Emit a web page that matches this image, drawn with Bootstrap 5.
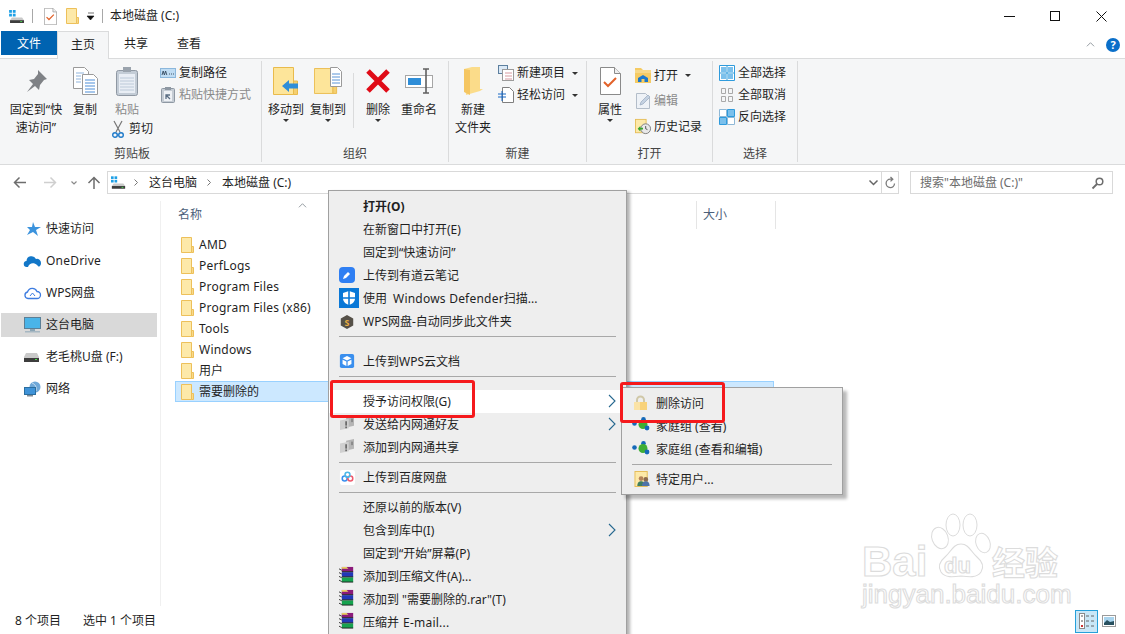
<!DOCTYPE html>
<html lang="zh-CN">
<head>
<meta charset="utf-8">
<title>本地磁盘 (C:)</title>
<link rel="stylesheet" href="https://cdn.jsdelivr.net/npm/bootstrap@5.3.0/dist/css/bootstrap.min.css">
<style>
html,body{margin:0;height:634px;overflow:hidden}
body{width:1125px;background:#fff;color:#1f1f1f;font:12px/18px "Noto Sans","Noto Sans CJK SC",sans-serif;position:relative}
svg{display:block;flex:none;overflow:visible}
.lat{letter-spacing:.22px}
.title-bar{height:31px;padding:1px 0 0 9px}
.tsep{width:1px;height:14px;background:#a8a8a8}
.g7{margin-left:7px}.g8{margin-left:8px}.g9{margin-left:9px}.g11{margin-left:11px}.g1{margin-left:1px}.g2{margin-left:2px}.g3{margin-left:3px}.g4{margin-left:4px}.g5{margin-left:5px}.g6{margin-left:6px}.g18{margin-left:18px}.g15{margin-left:15px}
.win-ctl{margin-left:auto;margin-right:1px}
.win-ctl button{width:46px;height:30px;border:0;background:none;padding:0;display:flex;align-items:center;justify-content:center}
.tab-bar{height:27px;padding-left:1px;position:relative}
.tab-item{height:24px;line-height:26px;text-align:center;width:51px}
.tab-file{width:56px;background:#0063b1;color:#fff}
.tab-on{height:28px;line-height:25px;border:1px solid #dadbdc;border-bottom:0;background:#f5f6f7;margin-bottom:-4px;z-index:2;position:relative;align-self:flex-start;width:52px;margin-right:-1px}
.tab-b{width:56px}.tab-c{width:50px}
.tab-help{margin-left:auto;padding-right:5px;gap:11px}
.ribbon-bar{height:107px;background:#f5f6f7;border-top:1px solid #dadbdc;border-bottom:1px solid #dadbdc;padding:2px 0 2px 3px}
.rg{border-right:1px solid #dadbdc;position:relative}
.rg1{width:259px}.rg2{width:187px}.rg3{width:138px}.rg4{width:126px}.rg5{width:85px}
.rg-body{height:84px;padding-top:5px}
.rg-name{height:18px;line-height:18px;text-align:center;color:#444}
.bigb{display:flex;flex-direction:column;align-items:center;text-align:center;line-height:18px;flex:none}
.bigb .ic{height:30px;margin-bottom:5px;display:flex;align-items:center;justify-content:center}
.w56{width:56px;margin-left:5px}.w40{width:40px}.w44{width:44px}.w36{width:36px}.w34{width:34px}
.mute{color:#8a8a8a}
.caretd{width:0;height:0;border:3px solid transparent;border-top:3px solid #333;border-bottom:0}
.vdiv{width:1px;height:55px;background:#dadbdc;margin:7px 4px 0 5px;flex:none}
.smallc{display:flex;flex-direction:column;flex:none;margin-top:-4px}
.smallr{height:22px;display:flex;align-items:center;gap:3px;white-space:nowrap}
.smallr svg{width:16px}
.smallc.tall{margin-top:-3px}
.smallc.tall .smallr{height:25.5px}
.cutr{height:18px;display:flex;align-items:center;gap:5px;margin-top:1px;margin-left:2px;white-space:nowrap}
.addr-row{height:25px;margin-top:5px;padding-left:14px}
.nav-ic{flex:none}
.addr-box{width:792px;height:23px;border:1px solid #d9d9d9;display:flex;align-items:center;margin-left:7px}
.seg-a{margin:0 10px 0 11px}
.addr-end{margin-left:auto;height:100%;display:flex;align-items:center}
.addr-ref{width:17px;height:100%;border-left:1px solid #d9d9d9;display:flex;align-items:center;justify-content:center;margin-left:3px}
.search-box{width:203px;height:23px;border:1px solid #d9d9d9;margin-left:11px;padding:0 8px 0 9px;color:#6d6d6d;display:flex;align-items:center;justify-content:space-between}
.main-area{flex:1;min-height:0;margin-top:6px}
.side-pane{width:161px;border-right:1px solid #f0f0f0;padding:16px 0 0 1px;flex:none}
.side-row{height:24px;margin-bottom:8px;display:flex;align-items:center;padding-left:23px;gap:5px;width:156px;white-space:nowrap}
.side-row svg{width:17px}
.side-row svg.usb-ic{width:15px;margin-right:2px}
.side-on{background:#d9d9d9}
.list-pane{flex:1;position:relative;padding-left:14px}
.head-row{height:33px;color:#4c607a;position:relative}
.head-name{padding:5px 0 0 3px;width:521px;height:28px}
.sort-up{position:absolute;left:123px;top:2px}
.head-size{border-left:1px solid #e5e5e5;width:80px;height:28px;padding:5px 0 0 6px;border-right:1px solid #e5e5e5}
.file-row{height:21px;width:599px;display:flex;align-items:center;gap:5px;padding-left:5px;border:1px solid transparent;white-space:nowrap}
.file-row svg{width:13px}
.file-sel{background:#cce8ff;border-color:#99d1ff}
.status-bar{height:28px;padding:2px 0 0 15px;position:relative}
.st-a{width:68px}
.view-btns{margin-left:auto;margin-right:9px;gap:4px}
.view-on{width:23px;height:23px;background:#c9e7f7;border:1px solid #26a0da;display:flex;align-items:center;justify-content:center}
.ctx{position:absolute;background:#eee;border:1px solid #a0a0a0;padding:4px 0;margin:0;list-style:none;box-shadow:4px 4px 3px rgba(0,0,0,.28);z-index:5}
.ctx-main{left:328px;top:190px;width:299px;height:460px;box-shadow:3px 2px 3px rgba(0,0,0,.3)}
.ctx-sub{left:621px;top:387px;width:222px;height:108px;z-index:6}
.ctx li{display:flex;align-items:center;height:23px;padding:0 0 0 34px;position:relative;white-space:nowrap}
.ctx li>svg.lic{position:absolute;left:10px;top:3px}
.ctx-sub li>svg.lic{left:12px}
.ctx li>svg.t1{top:1px}
.ctx li>svg.t4{top:4px}
.ctx-sub li>svg.t2{top:2px;left:10px}
.ctx-sub li>svg.t3{top:3px;left:10px}
.ctx li.bold-i{font-weight:700;padding-top:1px}
.ctx li.hit{background:#fff}
.ctx li.sp{height:7px;padding:0;margin:0}
.ctx li.sp::after{content:"";position:absolute;left:10px;right:10px;top:3px;height:1px;background:#a8a8a8}
.ctx li.gap{height:10px;padding:0}
.ctx li>svg.arr{position:absolute;right:10px;top:4px}
.redbox{position:absolute;border:3.5px solid #f5191c;border-radius:3px;z-index:7}
.rb-a{left:330px;top:380px;width:145px;height:38px}
.rb-b{left:620px;top:382px;width:105px;height:41px}
.wm{position:absolute;left:858px;top:510px;z-index:1}
.wm text{fill:#fff;stroke:#dcdcdc;stroke-width:1.1}
</style>
</head>
<body class="d-flex flex-column">
<svg width="0" height="0" class="position-absolute">
<defs>
<symbol id="drive" viewBox="0 0 17 14"><rect x="0" y="0" width="3" height="3" fill="#1ea0e6"/><rect x="4" y="0" width="3" height="3" fill="#1ea0e6"/><rect x="0" y="4" width="3" height="3" fill="#1ea0e6"/><rect x="4" y="4" width="3" height="3" fill="#1ea0e6"/><path d="M3 8h11l2 3v3H1v-3z" fill="#c9c9c9"/><rect x="1" y="11" width="15" height="3" fill="#3d3d3d"/><rect x="12" y="12" width="2" height="1" fill="#4ce04c"/></symbol>
<symbol id="fold" viewBox="0 0 13 16"><path d="M.5.5h10v15H.5z" fill="#fde9a9" stroke="#edc05a"/><path d="M10.5 9.5h2v6h-2z" fill="#f8d98a" stroke="#edc05a"/></symbol>
<symbol id="bigfold" viewBox="0 0 26 28"><path d="M.5.5h20v27H.5z" fill="#fde59a" stroke="#e9bb4c"/><path d="M20.5 14v13.500h4V14z" fill="#f5cf70" stroke="#e9bb4c"/></symbol>
<symbol id="doccheck" viewBox="0 0 21 28"><path d="M.5.500h14l6 6v21H.500z" fill="#fff" stroke="#8a8a8a"/><path d="M14.500.5v6h6" fill="#eee" stroke="#8a8a8a"/><path d="M4 15l4 4 8-8" fill="none" stroke="#e2622a" stroke-width="2"/></symbol>
<symbol id="chev" viewBox="0 0 12 7"><path d="M1 6l5-5 5 5" fill="none" stroke="currentColor"/></symbol>
<symbol id="subarrow" viewBox="0 0 8 14"><path d="M1 1l6 6-6 6" fill="none" stroke="#26688f" stroke-width="1.1"/></symbol>
<symbol id="rar" viewBox="0 0 18 18"><rect x="3" y="1" width="12" height="5" fill="#8b1a7a"/><rect x="3" y="6.500" width="12" height="5" fill="#2238b8"/><rect x="3" y="12" width="12" height="5" fill="#16a34f"/><path d="M3 1h5l2 2H3z" fill="#e8d060"/><path d="M0 3l3 1.500M0 7l3 1.500M0 11l3 1.500M0 15l3 1.500" stroke="#333" fill="none"/><path d="M3 6h12M3 11.500h12M3 17h12" stroke="#222"/></symbol>
<symbol id="lan" viewBox="0 0 18 16"><path d="M8 2l9-2v11l-9 2z" fill="#b5b5b5"/><path d="M1 5l10-2v11L1 16z" fill="#cfcfcf"/><rect x="7" y="6" width="2" height="5" fill="#6b6b6b"/><rect x="7" y="12" width="2" height="2" fill="#6b6b6b"/><rect x="14" y="3" width="1.500" height="4" fill="#777"/></symbol>
<symbol id="hgroup" viewBox="0 0 18 14"><circle cx="2.500" cy="6.500" r="2.300" fill="#1569b8"/><circle cx="11.500" cy="2.300" r="2.300" fill="#1569b8"/><circle cx="11" cy="7.500" r="4.500" fill="#3fae35"/><circle cx="15" cy="11" r="2.400" fill="#1569b8"/></symbol>
<symbol id="gridsel" viewBox="0 0 16 16"><path d="M.5.5h15v15H.5z" fill="#fff" stroke="#2f9bdc"/><path d="M8 .5v15M.5 8h15" stroke="#2f9bdc"/><rect x="2" y="2" width="5" height="5" fill="#7bc0ec"/><rect x="9" y="2" width="5" height="5" fill="#7bc0ec"/><rect x="2" y="9" width="5" height="5" fill="#7bc0ec"/><rect x="9" y="9" width="5" height="5" fill="#7bc0ec"/></symbol>
</defs>
</svg>

<!-- title bar -->
<div class="title-bar d-flex align-items-center">
  <svg width="16" height="13"><use href="#drive"/></svg>
  <span class="tsep g7"></span>
  <svg width="13" height="17" class="g11"><use href="#doccheck"/></svg>
  <svg width="13" height="16" class="g9"><use href="#fold"/></svg>
  <svg width="8" height="7" viewBox="0 0 8 7" class="g8"><path d="M1 0h6M0 3h7l-3.500 4z" fill="#111" stroke="#111" stroke-width=".6"/></svg>
  <span class="tsep g7"></span>
  <span class="g7">本地磁盘 (C:)</span>
  <div class="win-ctl d-flex">
    <button type="button" aria-label="min"><svg width="11" height="1"><rect width="11" height="1" fill="#111"/></svg></button>
    <button type="button" aria-label="max"><svg width="10" height="10"><rect x=".5" y=".5" width="9" height="9" fill="none" stroke="#111"/></svg></button>
    <button type="button" aria-label="close"><svg width="11" height="11"><path d="M.5.500l10 10M10.500.500l-10 10" stroke="#111"/></svg></button>
  </div>
</div>

<!-- tabs -->
<div class="tab-bar d-flex">
  <div class="tab-item tab-file">文件</div>
  <div class="tab-item tab-on">主页</div>
  <div class="tab-item tab-b">共享</div>
  <div class="tab-item tab-c">查看</div>
  <div class="tab-help d-flex align-items-center">
    <svg width="9" height="5" class="text-secondary"><use href="#chev"/></svg>
    <svg width="14" height="14" viewBox="0 0 14 14"><circle cx="7" cy="7" r="7" fill="#0a6fc9"/><text x="7" y="11" font-size="11" font-weight="700" text-anchor="middle" fill="#fff">?</text></svg>
  </div>
</div>

<!-- ribbon -->
<div class="ribbon-bar d-flex">
  <section class="rg rg1">
    <div class="rg-body d-flex">
      <div class="bigb w56">
        <div class="ic"><svg width="22" height="22" viewBox="0 0 22 22"><path d="M13 0l9 9-3 1-4 5-1 5-4-4-8 6 6-8-4-4 5-1 4-5z" fill="#7f8286"/></svg></div>
        固定到“快<br>速访问”
      </div>
      <div class="bigb w40 g1">
        <div class="ic"><svg width="25" height="28" viewBox="0 0 25 28"><path d="M.5.500h11l4 4v17H.500z" fill="#fff" stroke="#9a9a9a"/><path d="M9.500 7.500h11l4 4v16h-15z" fill="#fff" stroke="#9a9a9a"/><path d="M3 6h8M3 9h5M3 12h5M3 15h5" stroke="#8fb4dd"/><path d="M12 13h10M12 16h10M12 19h10M12 22h10M12 25h10" stroke="#4f8fd8"/></svg></div>
        复制
      </div>
      <div class="g5">
        <div class="bigb w34 mute">
          <div class="ic"><svg width="22" height="29" viewBox="0 0 22 29"><rect x=".5" y="3.500" width="21" height="25" rx="2" fill="#c3ccd6" stroke="#8f98a3"/><rect x="3" y="7" width="16" height="19" fill="#e9eef5"/><path d="M4 11h14M4 14h14M4 17h14M4 20h14M4 23h14" stroke="#bcc9d8"/><rect x="7" y="0" width="8" height="5" fill="#9aa3ad"/></svg></div>
          粘贴
        </div>
        <div class="cutr">
          <svg width="12" height="17" viewBox="0 0 12 17"><path d="M2 0l6 11M10 0L4 11" stroke="#777" stroke-width="1.200" fill="none"/><circle cx="3" cy="14" r="2.300" fill="none" stroke="#1f7ac9" stroke-width="1.400"/><circle cx="9" cy="14" r="2.300" fill="none" stroke="#1f7ac9" stroke-width="1.400"/></svg>
          剪切
        </div>
      </div>
      <div class="smallc g7">
        <div class="smallr"><svg height="10" viewBox="0 0 16 10"><rect x=".5" y=".5" width="15" height="9" fill="#bfdcf3" stroke="#8bb7dc"/><path d="M2 7l1.200-4 1.200 4 1.200-4 1.200 4M9 6h1M11 6h1M13 6h1" stroke="#33485e" fill="none" stroke-width=".9"/></svg>复制路径</div>
        <div class="smallr mute"><svg height="16" viewBox="0 0 16 16"><rect x="1.500" y="1.500" width="13" height="14" rx="1" fill="#c5ccd4" stroke="#8e98a3"/><rect x="4" y="4" width="8" height="10" fill="#eef1f5"/><rect x="5" y="0" width="6" height="3" fill="#8e98a3"/><path d="M6 12V8h4M6 8l4 4" fill="none" stroke="#5a6d83" stroke-width="1.300"/></svg>粘贴快捷方式</div>
      </div>
    </div>
    <div class="rg-name">剪贴板</div>
  </section>

  <section class="rg rg2">
    <div class="rg-body d-flex">
      <div class="bigb w44 g2">
        <div class="ic"><svg width="26" height="28" viewBox="0 0 26 28"><use href="#bigfold" width="26" height="28"/><path d="M9 19l7-6v3.500h9v5h-9V25z" fill="#2f8ed8"/></svg></div>
        移动到
        <span class="caretd"></span>
      </div>
      <div class="bigb w40">
        <div class="ic"><svg width="28" height="28" viewBox="0 0 28 28"><use href="#bigfold" width="24" height="28"/><path d="M16.500.500h7l4 4v15h-11z" fill="#fff" stroke="#9a9a9a"/><path d="M18 7h8M18 10h8M18 13h8M18 16h8" stroke="#5a94d6"/></svg></div>
        复制到
        <span class="caretd"></span>
      </div>
      <span class="vdiv"></span>
      <div class="bigb w40">
        <div class="ic"><svg width="26" height="26" viewBox="0 0 26 26"><path d="M3 3l20 20M23 3L3 23" stroke="#e00b17" stroke-width="5"/></svg></div>
        删除
        <span class="caretd"></span>
      </div>
      <div class="bigb w40 g1">
        <div class="ic"><svg width="28" height="26" viewBox="0 0 28 26"><rect x=".5" y="7.500" width="27" height="12" fill="#fff" stroke="#a6a6a6"/><rect x="3" y="10" width="13" height="7" fill="#2f8ed8"/><path d="M18 1h3m3 0h-3v24m-3 0h3m3 0h-3" stroke="#606060" stroke-width="1.600" fill="none"/></svg></div>
        重命名
      </div>
    </div>
    <div class="rg-name">组织</div>
  </section>

  <section class="rg rg3">
    <div class="rg-body d-flex">
      <div class="bigb w40 g4">
        <div class="ic"><svg width="20" height="28" viewBox="0 0 20 28"><path d="M1 2l8-2h8v22h3l-3 2-14 4z" fill="#fbdc8a"/><path d="M1 2l6 1v25l-6-3z" fill="#f5c662"/></svg></div>
        新建<br>文件夹
      </div>
      <div class="smallc g5">
        <div class="smallr"><svg height="16" viewBox="0 0 16 16"><rect x=".5" y=".5" width="9" height="8" fill="#dbe9f6" stroke="#5c7f9f"/><rect x="4.500" y="4.500" width="11" height="11" fill="#fff" stroke="#9b9b9b"/><path d="M7 8h7M7 11h7M7 14h7" stroke="#d79aa0"/></svg>新建项目<span class="caretd ms-1"></span></div>
        <div class="smallr"><svg height="16" viewBox="0 0 16 16"><path d="M4.500.500h7l4 4v11h-11z" fill="#fff" stroke="#7f7f7f"/><path d="M0 7h8M0 10h8M4 4v10" stroke="#1968c4" fill="none"/></svg>轻松访问<span class="caretd ms-1"></span></div>
      </div>
    </div>
    <div class="rg-name">新建</div>
  </section>

  <section class="rg rg4">
    <div class="rg-body d-flex">
      <div class="bigb w36 g5">
        <div class="ic"><svg width="21" height="28"><use href="#doccheck" width="21" height="28"/></svg></div>
        属性
        <span class="caretd"></span>
      </div>
      <div class="smallc tall g7">
        <div class="smallr"><svg height="15" viewBox="0 0 16 15"><path d="M0 0h6l2 2h8v13H0z" fill="#f5cb64"/><rect y="2" width="16" height="3" fill="#f7d98a"/><path d="M3 14V10l5-3 5 3v4z" fill="#1b78cc"/><rect x="6.500" y="11" width="3" height="3" fill="#f5cb64"/></svg>打开<span class="caretd ms-1"></span></div>
        <div class="smallr mute"><svg height="16" viewBox="0 0 16 16"><path d="M1.500.500h9l4 4v11h-13z" fill="#eef2f7" stroke="#b3bdc9"/><path d="M5 12l1-3 7-7 2 2-7 7z" fill="#c5d2e2" stroke="#9fb0c4" stroke-width=".8"/></svg>编辑</div>
        <div class="smallr"><svg height="17" viewBox="0 0 18 17"><rect x=".5" y=".5" width="12" height="15" fill="#fde9a9" stroke="#e5bc55"/><circle cx="12" cy="11" r="5.500" fill="#e9e9e9" stroke="#777"/><path d="M12 8v3l2 1" stroke="#444" fill="none"/><path d="M3 11l3-3v2h3v2H6v2z" fill="#38a52e"/></svg>历史记录</div>
      </div>
    </div>
    <div class="rg-name">打开</div>
  </section>

  <section class="rg rg5">
    <div class="rg-body d-flex">
      <div class="smallc g6">
        <div class="smallr"><svg height="16"><use href="#gridsel" width="16" height="16"/></svg>全部选择</div>
        <div class="smallr"><svg height="16" viewBox="0 0 16 16"><path d="M2.500 1.500h4v5h-4zM9.500 1.500h4v5h-4zM2.500 9.500h4v5h-4zM9.500 9.500h4v5h-4z" fill="none" stroke="#a9a9a9"/></svg>全部取消</div>
        <div class="smallr"><svg height="16" viewBox="0 0 16 16"><path d="M.5 8.500h7v7h-7zM8.500.5h7v7h-7z" fill="#7bc0ec" stroke="#2f9bdc"/><path d="M.5.500h7v7h-7zM8.500 8.500h7v7h-7z" fill="#fff" stroke="#8fb8d6"/></svg>反向选择</div>
      </div>
    </div>
    <div class="rg-name">选择</div>
  </section>
</div>

<!-- address -->
<div class="addr-row d-flex align-items-center">
  <svg class="nav-ic" width="12" height="11" viewBox="0 0 12 11"><path d="M5.500.500l-5 5 5 5M1 5.500h11" fill="none" stroke="#6d6d6d" stroke-width="1.500"/></svg>
  <svg class="nav-ic g18" width="12" height="11" viewBox="0 0 12 11"><path d="M6.500.500l5 5-5 5M11 5.500H0" fill="none" stroke="#cfcfcf" stroke-width="1.500"/></svg>
  <svg class="nav-ic g15" width="6" height="4" viewBox="0 0 6 4"><path d="M.5.500L3 3 5.500.500" fill="none" stroke="#8a8a8a" stroke-width="1.200"/></svg>
  <svg class="nav-ic g11" width="12" height="12" viewBox="0 0 12 12"><path d="M.5 6l5.500-5.500L11.500 6M6 1v11" fill="none" stroke="#6d6d6d" stroke-width="1.500"/></svg>
  <div class="addr-box">
    <svg width="15" height="13" class="g3"><use href="#drive"/></svg>
    <svg width="4" height="7" viewBox="0 0 4 7" class="g8"><path d="M.5.500l3 3-3 3" fill="none" stroke="#777"/></svg>
    <span class="seg-a">这台电脑</span>
    <svg width="4" height="7" viewBox="0 0 4 7"><path d="M.5.500l3 3-3 3" fill="none" stroke="#777"/></svg>
    <span class="g11">本地磁盘 (C:)</span>
    <div class="addr-end">
      <svg width="9" height="6" viewBox="0 0 9 6"><path d="M.5.500l4 4 4-4" fill="none" stroke="#666" stroke-width="1.500"/></svg>
      <div class="addr-ref"><svg width="11" height="12" viewBox="0 0 11 12"><path d="M9.500 6.500a4.200 4.200 0 1 1-4.200-4.300h2M5.500 0l2.300 2.200L5.500 4.400" fill="none" stroke="#7a7a7a" stroke-width="1.300"/></svg></div>
    </div>
  </div>
  <div class="search-box">
    <span>搜索"本地磁盘 (C:)"</span>
    <svg width="12" height="12" viewBox="0 0 12 12"><circle cx="7.500" cy="4.500" r="3.300" fill="none" stroke="#6d6d6d" stroke-width="1.500"/><path d="M5 7l-4.500 4.500" stroke="#6d6d6d" stroke-width="1.800"/></svg>
  </div>
</div>

<!-- main -->
<div class="main-area d-flex">
  <nav class="side-pane">
    <div class="side-row"><svg height="14" viewBox="0 0 17 14"><path d="M9 0l2 5h6l-5 3 2 6-5-4-6 3 3-5-3-3h5z" fill="#3b93dd"/></svg>快速访问</div>
    <div class="side-row"><svg height="12" viewBox="0 0 17 12"><path d="M3 12a3 3 0 0 1-.5-6A5 5 0 0 1 12 4a4 4 0 0 1 5 4 4 4 0 0 1-3 4z" fill="#1277c8"/><path d="M4 12c1-4 6-5 9-2l2 2z" fill="#fff"/></svg><span class="lat">OneDrive</span></div>
    <div class="side-row"><svg height="12" viewBox="0 0 17 12"><path d="M4 11.500a3.300 3.300 0 0 1-.5-6.500A5 5 0 0 1 13 4.500a3.500 3.500 0 0 1 0 7z" fill="#fff" stroke="#3d7ce0" stroke-width="1.300"/><path d="M6 9l2.500-3L11 9" fill="none" stroke="#3d7ce0"/></svg>WPS网盘</div>
    <div class="side-row side-on"><svg height="16" viewBox="0 0 17 16"><rect x=".5" y=".5" width="16" height="11" fill="#4ab4e8" stroke="#5b7f96"/><rect x="6" y="12" width="5" height="2" fill="#8ba5b5"/><rect x="1" y="14" width="15" height="1.500" fill="#a6b7c2"/></svg>这台电脑</div>
    <div class="side-row"><svg class="usb-ic" height="9" viewBox="0 0 15 9"><path d="M2 0h11l2 4v5H0V4z" fill="#c9c9c9"/><rect y="5" width="15" height="4" fill="#3d3d3d"/><rect x="11" y="6" width="2" height="1" fill="#4ce04c"/></svg>老毛桃U盘 (F:)</div>
    <div class="side-row"><svg height="16" viewBox="0 0 17 16"><circle cx="11" cy="6" r="5.500" fill="#6fa8d8"/><path d="M8 2c3 1 5 4 4 8" stroke="#c7dff2" fill="none"/><rect x=".5" y="6.500" width="11" height="7" fill="#3f93d8" stroke="#2b6e9f"/><rect x="3" y="14" width="6" height="1.500" fill="#7e8a94"/></svg>网络</div>
  </nav>
  <div class="list-pane">
    <div class="head-row d-flex">
      <div class="head-name">名称</div>
      <svg class="sort-up text-secondary" width="9" height="5"><use href="#chev"/></svg>
      <div class="head-size">大小</div>
    </div>
    <div class="file-row"><svg height="16"><use href="#fold"/></svg><span class="lat">AMD</span></div>
    <div class="file-row"><svg height="16"><use href="#fold"/></svg><span class="lat">PerfLogs</span></div>
    <div class="file-row"><svg height="16"><use href="#fold"/></svg><span class="lat">Program Files</span></div>
    <div class="file-row"><svg height="16"><use href="#fold"/></svg><span class="lat">Program Files (x86)</span></div>
    <div class="file-row"><svg height="16"><use href="#fold"/></svg><span class="lat">Tools</span></div>
    <div class="file-row"><svg height="16"><use href="#fold"/></svg><span class="lat">Windows</span></div>
    <div class="file-row"><svg height="16"><use href="#fold"/></svg>用户</div>
    <div class="file-row file-sel"><svg height="16"><use href="#fold"/></svg>需要删除的</div>
  </div>
</div>

<!-- status -->
<footer class="status-bar d-flex align-items-center">
  <span class="st-a">8 个项目</span>
  <span>选中 1 个项目</span>
  <div class="view-btns d-flex align-items-center">
    <div class="view-on"><svg width="16" height="16" viewBox="0 0 16 16"><rect x=".5" y=".5" width="5" height="15" fill="#fff" stroke="#8a8a8a"/><path d="M2 3h2M2 8h2" stroke="#555"/><rect x="2" y="12" width="2" height="2" fill="#c33"/><path d="M7 3h3M12 3h3M7 8h3M12 8h3M7 13h3M12 13h3" stroke="#666"/></svg></div>
    <svg width="14" height="12" viewBox="0 0 14 12"><rect x=".5" y=".5" width="13" height="11" fill="#fff" stroke="#9a9a9a"/><rect x="2" y="2" width="10" height="8" fill="#a9d4ee"/><path d="M2 8l3-3 3 2 4-1v4H2z" fill="#28505f"/></svg>
  </div>
</footer>

<!-- watermark -->
<svg class="wm" width="215" height="105" viewBox="0 0 215 105">
  <ellipse cx="82" cy="28" rx="8" ry="11" fill="#fff" stroke="#dcdcdc" transform="rotate(-20 82 28)"/>
  <ellipse cx="95" cy="15" rx="7" ry="11" fill="#fff" stroke="#dcdcdc"/>
  <ellipse cx="112" cy="15" rx="7" ry="11" fill="#fff" stroke="#dcdcdc"/>
  <ellipse cx="125" cy="33" rx="7" ry="10" fill="#fff" stroke="#dcdcdc" transform="rotate(-20 125 33)"/>
  <path d="M103 34c8 0 10 8 16 13 6 5 7 10 4 15-4 6-12 5-20 4-8 1-16 2-20-4-3-5-2-10 4-15 6-5 8-13 16-13z" fill="#fff" stroke="#dcdcdc" stroke-width="1.100"/>
  <text x="4" y="66" font-family="Liberation Sans" font-weight="700" font-size="42">Bai</text>
  <text x="86" y="63" font-family="Liberation Sans" font-weight="700" font-size="22">du</text>
  <text x="134" y="65" font-family="Noto Sans CJK SC" font-weight="700" font-size="33">经验</text>
  <text x="4" y="93" font-family="Liberation Sans" font-size="26">jingyan.baidu.com</text>
</svg>

<!-- context menu -->
<ul class="ctx ctx-main">
  <li class="bold-i">打开(O)</li>
  <li>在新窗口中打开(E)</li>
  <li>固定到“快速访问”</li>
  <li><svg class="lic" width="16" height="16" viewBox="0 0 16 16"><rect width="16" height="16" rx="4" fill="#2f7ff3"/><path d="M4 12l1-3 4-4 2 2-4 4z" fill="#fff"/></svg>上传到有道云笔记</li>
  <li><svg class="lic t1" width="20" height="20" viewBox="0 0 20 20"><rect width="20" height="20" fill="#0a78d7"/><path d="M10 3l6 2v5c0 4-3 6-6 7-3-1-6-3-6-7V5z" fill="#fff"/><path d="M10 3v14M4 10h12" stroke="#0a78d7" stroke-width="1.600"/></svg>使用<span class="lat g6">Windows Defender</span>扫描...</li>
  <li><svg class="lic t4" width="16" height="16" viewBox="0 0 18 18"><path d="M9 1l7 4v8l-7 4-7-4V5z" fill="#555048"/><text x="9" y="13" font-size="10" font-weight="700" text-anchor="middle" fill="#e8ad42">S</text></svg>WPS网盘-自动同步此文件夹</li>
  <li class="sp"></li>
  <li class="gap"></li>
  <li><svg class="lic" width="16" height="16" viewBox="0 0 18 18"><rect x="1" y="1" width="16" height="16" rx="2" fill="#3a8fee"/><path d="M9 3.500l5 2.500-5 2.500-5-2.500zM4 7.500l4.300 2.200v5L4 12.500zM14 7.500l-4.300 2.200v5l4.300-2.200z" fill="#fff"/></svg>上传到WPS云文档</li>
  <li class="sp"></li>
  <li class="gap"></li>
  <li class="hit">授予访问权限(G)<svg class="arr" width="8" height="14"><use href="#subarrow"/></svg></li>
  <li><svg class="lic" width="16" height="14"><use href="#lan"/></svg>发送给内网通好友<svg class="arr" width="8" height="14"><use href="#subarrow"/></svg></li>
  <li><svg class="lic" width="16" height="14"><use href="#lan"/></svg>添加到内网通共享</li>
  <li class="sp"></li>
  <li><svg class="lic" width="17" height="17" viewBox="0 0 18 18"><rect x="1" y="1" width="16" height="16" rx="3" fill="#fff"/><circle cx="6" cy="10" r="2.600" fill="none" stroke="#3a8fee" stroke-width="1.600"/><circle cx="12" cy="10" r="2.600" fill="none" stroke="#ef5b6d" stroke-width="1.600"/><circle cx="9" cy="6" r="2.600" fill="none" stroke="#4cb7e8" stroke-width="1.600"/></svg>上传到百度网盘</li>
  <li class="sp"></li>
  <li>还原以前的版本(V)</li>
  <li>包含到库中(I)<svg class="arr" width="8" height="14"><use href="#subarrow"/></svg></li>
  <li>固定到“开始”屏幕(P)</li>
  <li><svg class="lic t1" width="17" height="17"><use href="#rar"/></svg>添加到压缩文件(A)...</li>
  <li><svg class="lic t1" width="17" height="17"><use href="#rar"/></svg>添加到 "需要删除的.rar"(T)</li>
  <li><svg class="lic t1" width="17" height="17"><use href="#rar"/></svg>压缩并<span class="lat g4">E-mail...</span></li>
</ul>

<!-- submenu -->
<ul class="ctx ctx-sub">
  <li><svg class="lic t4" width="13" height="14" viewBox="0 0 13 14"><path d="M3 6V4a3.500 3.500 0 0 1 7 0v2" fill="none" stroke="#d0c8a8" stroke-width="2"/><rect y="6" width="13" height="8" fill="#f8d27a"/><rect y="6" width="6" height="8" fill="#fbe3a6"/></svg>删除访问</li>
  <li><svg class="lic t2" width="18" height="14"><use href="#hgroup"/></svg>家庭组 (查看)</li>
  <li><svg class="lic t3" width="18" height="14"><use href="#hgroup"/></svg>家庭组 (查看和编辑)</li>
  <li class="sp"></li>
  <li><svg class="lic" width="17" height="16" viewBox="0 0 17 17"><rect x=".5" y=".5" width="13" height="16" fill="#fde9a9" stroke="#e5bc55"/><circle cx="7" cy="8" r="2.500" fill="#b5835a"/><path d="M3 16c0-4 2-5 4-5s4 1 4 5z" fill="#3f7f5f"/><circle cx="12" cy="9" r="2.500" fill="#8a6a50"/><path d="M8 16c0-4 2-5 4-5s4 1 4 5z" fill="#4f74a8"/></svg>特定用户...</li>
</ul>

<div class="redbox rb-a"></div>
<div class="redbox rb-b"></div>
<script src="https://cdn.jsdelivr.net/npm/bootstrap@5.3.0/dist/js/bootstrap.bundle.min.js"></script>
</body>
</html>
